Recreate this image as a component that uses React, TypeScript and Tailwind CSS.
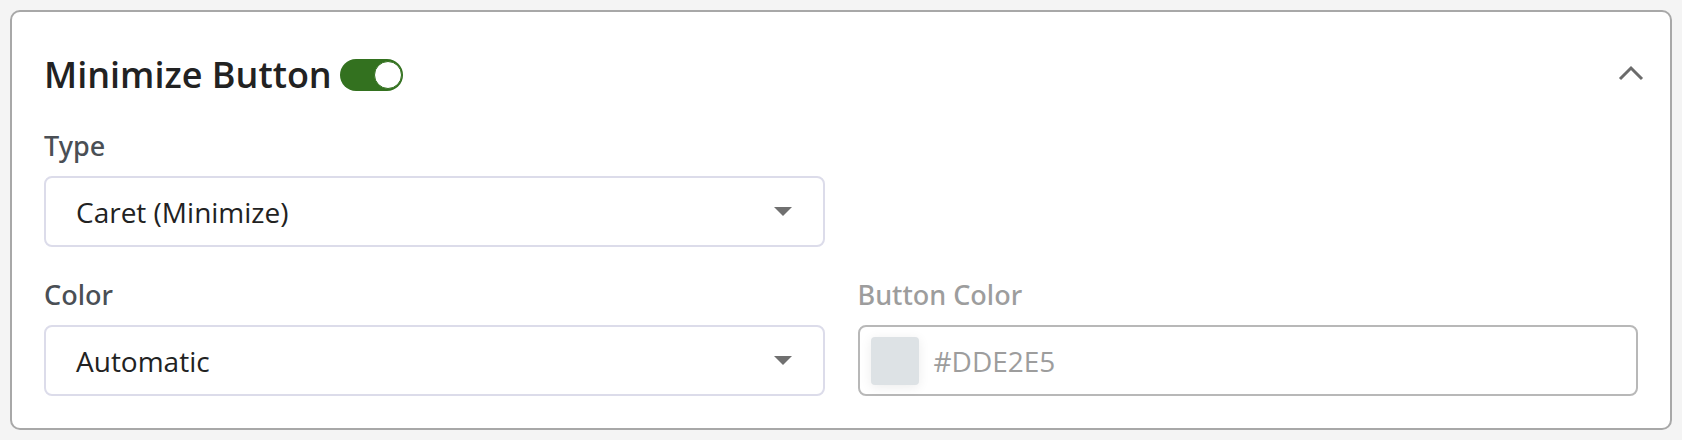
import React from "react";

function Caret() {
  return (
    <svg width="18" height="9" viewBox="0 0 18 9" className="shrink-0">
      <path d="M0 0 L18 0 L9 9 Z" fill="#707070" />
    </svg>
  );
}

function Select({ value }: { value: string }) {
  return (
    <div className="flex h-[71px] items-center justify-between rounded-[8px] border-2 border-[#dcdcea] bg-white pl-[30px] pr-[31px]">
      <span className="text-[28px] leading-[36px] text-[#222222]">{value}</span>
      <Caret />
    </div>
  );
}

const labelFont = { fontFamily: '"Noto Sans", "Open Sans", sans-serif' };

export default function App() {
  return (
    <div
      className="h-[440px] w-full bg-[#f4f4f4] p-[10px]"
      style={{ fontFamily: '"Open Sans", "Noto Sans", sans-serif' }}
    >
      <div className="h-[420px] rounded-[10px] border-2 border-[#a8a8a8] bg-white px-[32px] pt-[30px]">
        <div className="flex h-[66px] items-center justify-between">
          <div className="flex items-center gap-[8px]">
            <h2 className="text-[36px] font-semibold leading-none text-[#222222]">Minimize Button</h2>
            <button className="relative flex h-[32px] w-[63px] items-center rounded-full bg-[#33711f]">
              <span className="absolute right-[1px] top-[2px] h-[28px] w-[28px] rounded-full border border-[#33711f] bg-white" />
            </button>
          </div>
          <svg width="26" height="16" viewBox="0 0 26 16" className="mr-[-6px] mb-[4px]">
            <path d="M2 14 L13 3 L24 14" fill="none" stroke="#6b6b6b" strokeWidth="3" />
          </svg>
        </div>
        <div className="mt-[20px] grid grid-cols-2 gap-x-[33px]">
          <div className="flex flex-col">
            <label style={labelFont} className="mb-[12px] text-[27px] font-medium leading-[36px] text-[#4a4f55]">Type</label>
            <Select value="Caret (Minimize)" />
          </div>
          <div />
          <div className="mt-[30px] flex flex-col">
            <label style={labelFont} className="mb-[12px] text-[27px] font-medium leading-[36px] text-[#4a4f55]">Color</label>
            <Select value="Automatic" />
          </div>
          <div className="mt-[30px] flex flex-col">
            <label style={labelFont} className="mb-[12px] text-[27px] font-medium leading-[36px] text-[#9d9d9d]">Button Color</label>
            <div className="flex h-[71px] items-center gap-[15px] rounded-[8px] border-2 border-[#b8b8b8] bg-white pl-[11px]">
              <span className="h-[48px] w-[48px] rounded-[4px] bg-[#dde2e5] shadow-[0_2px_12px_rgba(0,0,0,0.08)]" />
              <span className="text-[28px] leading-[36px] text-[#9d9d9d]">#DDE2E5</span>
            </div>
          </div>
        </div>
      </div>
    </div>
  );
}
